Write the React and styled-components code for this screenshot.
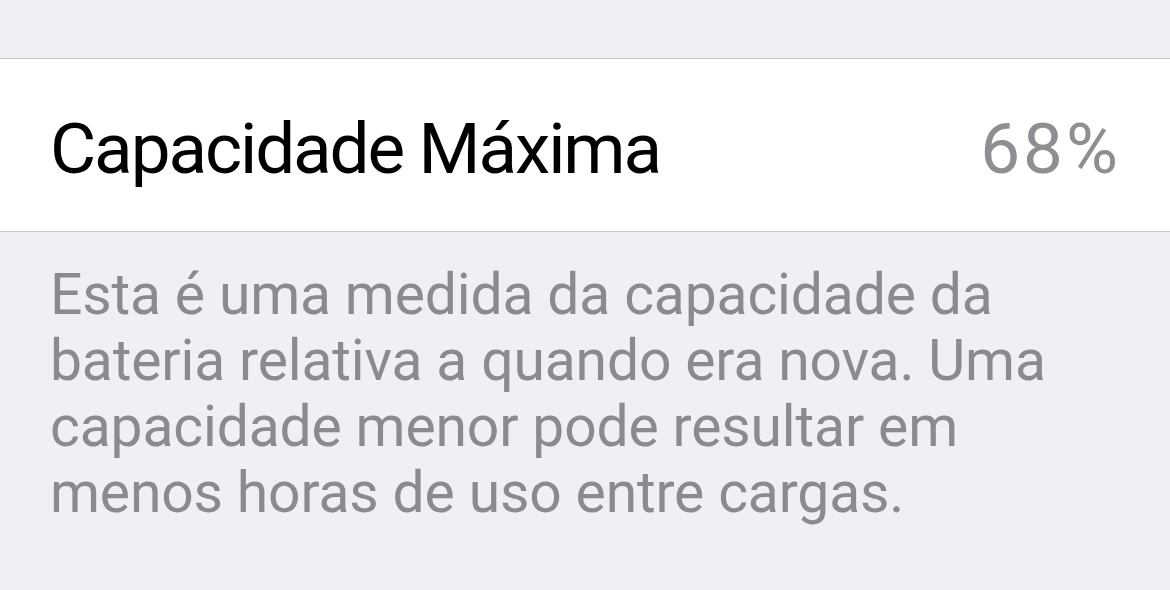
import React from "react";
import styled, { createGlobalStyle } from "styled-components";

const Global = createGlobalStyle`
  html, body {
    margin: 0;
    padding: 0;
    background: #efeff4;
  }
  body {
    font-family: Roboto, "Noto Sans", "Liberation Sans", sans-serif;
    -webkit-font-smoothing: antialiased;
  }
`;

const Screen = styled.div`
  width: 1170px;
  height: 590px;
  overflow: hidden;
  background: #efeff4;
  padding-top: 58px;
  box-sizing: border-box;
`;

const Group = styled.div`
  background: #ffffff;
  border-top: 1px solid #c8c7cc;
  border-bottom: 1px solid #c8c7cc;
`;

const Row = styled.div`
  height: 172px;
  display: flex;
  align-items: center;
  justify-content: space-between;
  padding: 6px 49px 0 50px;
  box-sizing: border-box;
`;

const Label = styled.span`
  font-size: 71px;
  color: #000000;
  letter-spacing: -2.1px;
`;

const Value = styled.span`
  font-size: 71px;
  color: #8e8e93;
  letter-spacing: 3px;
`;

const Footer = styled.p`
  margin: 0;
  padding: 30px 60px 0 50px;
  font-size: 57px;
  line-height: 66px;
  color: #8a8a8f;
  letter-spacing: -0.15px;
`;

export default function App() {
  return (
    <>
      <Global />
      <Screen>
        <Group>
          <Row>
            <Label>Capacidade Máxima</Label>
            <Value>68%</Value>
          </Row>
        </Group>
        <Footer>
          Esta é uma medida da capacidade da bateria relativa a quando era nova.
          Uma capacidade menor pode resultar em menos horas de uso entre cargas.
        </Footer>
      </Screen>
    </>
  );
}
